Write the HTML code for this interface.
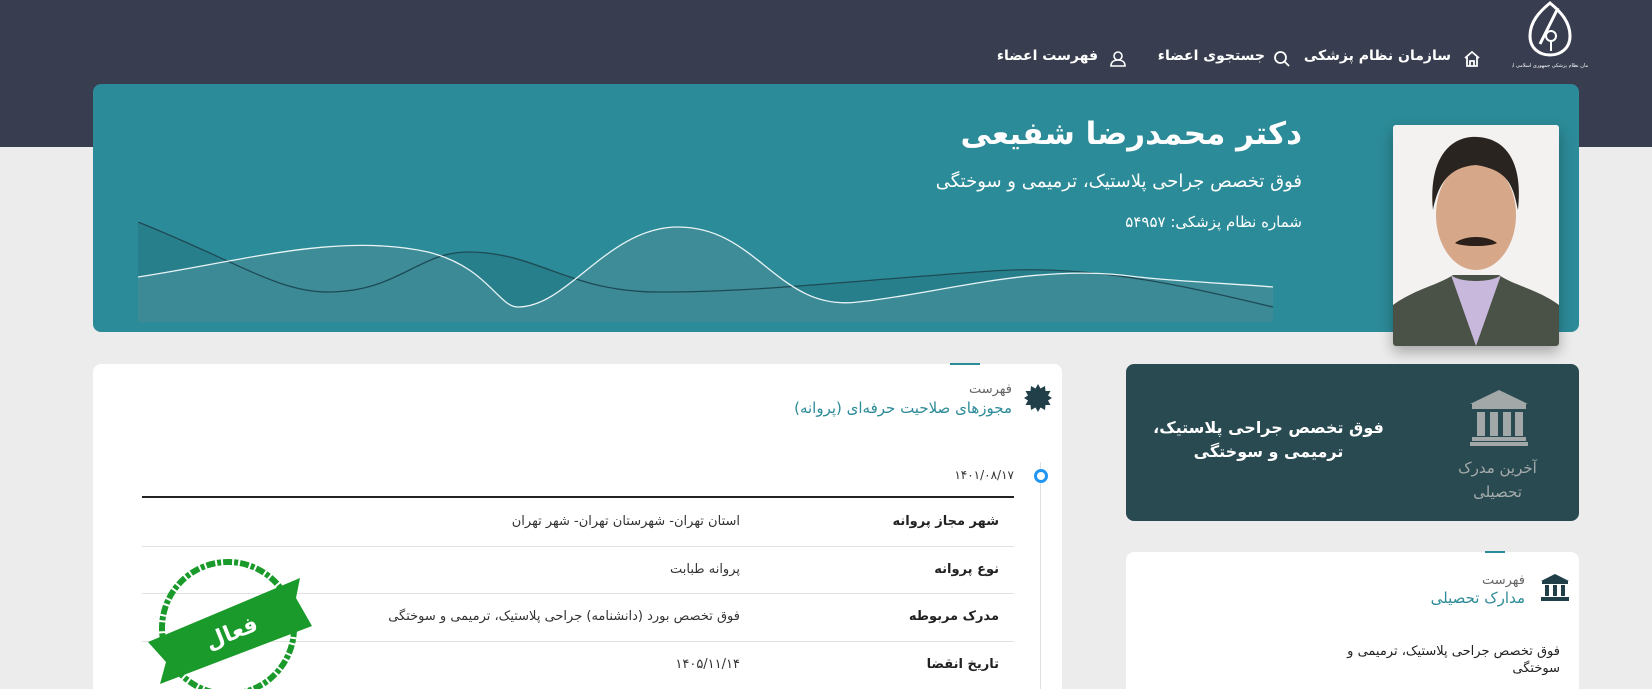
<!DOCTYPE html>
<html lang="fa" dir="rtl"><head><meta charset="utf-8">
<style>
*{margin:0;padding:0;box-sizing:border-box}
html{width:1652px;height:689px;overflow:hidden}
body{width:1652px;height:689px;overflow:hidden;background:#ececec;font-family:"DejaVu Sans","Liberation Sans",sans-serif;position:relative}
.abs{position:absolute}
.hdr{left:0;top:0;width:1652px;height:147px;background:#383d4f}
.nav{top:48px;color:#fff;font-size:14px;font-weight:bold;white-space:nowrap}
.banner{left:93px;top:84px;width:1486px;height:248px;background:#2c8b98;border-radius:8px;overflow:hidden}
.t{white-space:nowrap;direction:rtl}
.card{background:#fff;border-radius:8px 8px 0 0}
.lbl{font-size:13px;font-weight:bold;color:#222}
.val{font-size:13px;color:#333}
.sep{height:1px;background:#e3e3e3;left:142px;width:872px}
</style></head><body>
<div class="abs hdr"></div>
<svg class="abs" style="left:1512px;top:0px" width="76" height="74" viewBox="0 0 76 74">
<path d="M38 3 C27 12 18 22 18 36 C18 48 27 55 38 55 C49 55 58 48 58 36 C58 22 49 12 38 3Z" fill="none" stroke="#fff" stroke-width="3"/>
<path d="M46 8 L28 44" stroke="#fff" stroke-width="3"/>
<circle cx="39" cy="36" r="5" fill="none" stroke="#fff" stroke-width="2"/>
<path d="M39 41 V51" stroke="#fff" stroke-width="2"/>
<text x="38" y="67" font-size="5" fill="#fff" text-anchor="middle" font-family="DejaVu Sans">سازمان نظام پزشکی جمهوری اسلامی ایران</text>
</svg>
<svg class="abs" style="left:1463px;top:50px" width="18" height="18" viewBox="0 0 18 18"><path d="M2 8 L9 2 L16 8 M4 7 V16 H14 V7 M7 16 V11 H11 V16" fill="none" stroke="#fff" stroke-width="1.8"/></svg>
<div class="abs nav t" style="right:201px">سازمان نظام پزشکی</div>
<svg class="abs" style="left:1273px;top:50px" width="18" height="18" viewBox="0 0 18 18"><circle cx="7.5" cy="7.5" r="5.5" fill="none" stroke="#fff" stroke-width="1.8"/><path d="M11.5 11.5 L16 16" stroke="#fff" stroke-width="1.8"/></svg>
<div class="abs nav t" style="right:387px">جستجوی اعضاء</div>
<svg class="abs" style="left:1109px;top:50px" width="18" height="18" viewBox="0 0 18 18"><circle cx="9" cy="6" r="4" fill="none" stroke="#fff" stroke-width="1.6"/><path d="M2 16 C2 11 6 10 9 10 C12 10 16 11 16 16 Z" fill="none" stroke="#fff" stroke-width="1.6"/></svg>
<div class="abs nav t" style="right:554px">فهرست اعضاء</div>

<div class="abs banner">
<svg class="abs" style="left:45px;top:138px" width="1135" height="100" viewBox="0 0 1135 100">
<path d="M0 0 C100 40 140 70 190 70 C260 70 280 30 330 30 C400 30 430 70 520 70 C620 70 700 60 840 50 C950 40 1050 65 1135 85 V100 H0Z" fill="#287f8c"/>
<path d="M0 55 C100 40 200 10 290 30 C350 45 360 85 380 85 C430 85 470 5 540 5 C620 5 640 90 720 80 C800 72 900 40 1000 55 C1050 60 1100 62 1135 65 V100 H0Z" fill="#3f8c98" opacity="0.9"/>
<path d="M0 0 C100 40 140 70 190 70 C260 70 280 30 330 30 C400 30 430 70 520 70 C620 70 700 60 840 50 C950 40 1050 65 1135 85" fill="none" stroke="#1d4b55" stroke-width="1.3"/>
<path d="M0 55 C100 40 200 10 290 30 C350 45 360 85 380 85 C430 85 470 5 540 5 C620 5 640 90 720 80 C800 72 900 40 1000 55 C1050 60 1100 62 1135 65" fill="none" stroke="#e8f4f5" stroke-width="1.3"/>
</svg>
</div>
<div class="abs t" style="right:350px;top:116px;font-size:31px;font-weight:bold;color:#fff">دکتر محمدرضا شفیعی</div>
<div class="abs t" style="right:350px;top:171px;font-size:18px;color:#fff">فوق تخصص جراحی پلاستیک، ترمیمی و سوختگی</div>
<div class="abs t" style="right:350px;top:213px;font-size:15px;color:#fff">شماره نظام پزشکی: ۵۴۹۵۷</div>
<div class="abs" style="left:1393px;top:125px;width:166px;height:221px;background:#fff;border-radius:3px;box-shadow:0 6px 14px rgba(0,0,0,.3);overflow:hidden">
<svg width="166" height="221" viewBox="0 0 166 221">
<rect width="166" height="221" fill="#f4f2f0"/>
<path d="M0 221 V180 C20 165 45 160 60 150 L106 150 C120 160 146 165 166 180 V221Z" fill="#4a5146"/>
<path d="M58 150 L83 221 L108 150 C100 158 66 158 58 150Z" fill="#c8b9dc"/>
<ellipse cx="83" cy="90" rx="40" ry="55" fill="#d7a789"/>
<path d="M40 85 C35 30 60 10 85 12 C115 14 130 40 125 85 C120 60 115 45 83 40 C55 42 45 60 40 85Z" fill="#2a2420"/>
<path d="M62 118 C72 110 94 110 104 118 C96 122 70 122 62 118Z" fill="#2a1f1a"/>
</svg></div>

<div class="abs card" style="left:93px;top:364px;width:969px;height:325px"></div>
<div class="abs" style="left:950px;top:363px;width:30px;height:2px;background:#2c8b98"></div>
<svg class="abs" style="left:1024px;top:384px" width="28" height="28" viewBox="0 0 28 28"><polygon fill="#213f48" points="14,0 16.5,4.5 21,2 21.5,7 26.5,7 24,11.5 28,14 24,16.5 26.5,21 21.5,21 21,26 16.5,23.5 14,28 11.5,23.5 7,26 6.5,21 1.5,21 4,16.5 0,14 4,11.5 1.5,7 6.5,7 7,2 11.5,4.5"/></svg>
<div class="abs t" style="right:640px;top:382px;font-size:13px;color:#666">فهرست</div>
<div class="abs t" style="right:640px;top:399px;font-size:15px;color:#2c8b98">مجوزهای صلاحیت حرفه‌ای (پروانه)</div>
<div class="abs" style="left:1040px;top:462px;width:1px;height:227px;background:#e0e0e0"></div>
<div class="abs" style="left:1034px;top:469px;width:14px;height:14px;border:3px solid #2196f3;border-radius:50%;background:#fff"></div>
<div class="abs t" style="right:638px;top:468px;font-size:12px;color:#333">۱۴۰۱/۰۸/۱۷</div>
<div class="abs" style="left:142px;top:496px;width:872px;height:2px;background:#222"></div>
<div class="abs lbl t" style="right:653px;top:514px">شهر مجاز پروانه</div>
<div class="abs val t" style="right:912px;top:514px">استان تهران- شهرستان تهران- شهر تهران</div>
<div class="abs sep" style="top:546px"></div>
<div class="abs lbl t" style="right:653px;top:562px">نوع پروانه</div>
<div class="abs val t" style="right:912px;top:562px">پروانه طبابت</div>
<div class="abs sep" style="top:593px"></div>
<div class="abs lbl t" style="right:653px;top:609px">مدرک مربوطه</div>
<div class="abs val t" style="right:912px;top:609px">فوق تخصص بورد (دانشنامه) جراحی پلاستیک، ترمیمی و سوختگی</div>
<div class="abs sep" style="top:641px"></div>
<div class="abs lbl t" style="right:653px;top:657px">تاریخ انقضا</div>
<div class="abs val t" style="right:912px;top:657px">۱۴۰۵/۱۱/۱۴</div>
<svg class="abs" style="left:140px;top:550px" width="180" height="139" viewBox="0 0 180 139">
<circle cx="88" cy="78" r="66" fill="none" stroke="#1a9a2a" stroke-width="6" stroke-dasharray="9 2 4 2"/>
<polygon points="8,92 160,28 156,48 172,76 20,134 26,112" fill="#1a9a2a"/>
<text x="92" y="90" font-size="22" font-weight="bold" fill="#fff" text-anchor="middle" transform="rotate(-22 92 84)" font-family="DejaVu Sans">فعال</text>
</svg>

<div class="abs" style="left:1126px;top:364px;width:453px;height:157px;background:#284a50;border-radius:8px"></div>
<svg class="abs" style="left:1470px;top:390px" width="58" height="56" viewBox="0 0 58 56"><polygon points="29,0 58,14 0,14" fill="#a2a7a8"/><rect x="2" y="14" width="54" height="5" fill="#a2a7a8"/><rect x="7" y="22" width="8" height="24" fill="#a2a7a8"/><rect x="20" y="22" width="8" height="24" fill="#a2a7a8"/><rect x="33" y="22" width="8" height="24" fill="#a2a7a8"/><rect x="45" y="22" width="8" height="24" fill="#a2a7a8"/><rect x="2" y="47" width="54" height="4" fill="#a2a7a8"/><rect x="0" y="52" width="58" height="4" fill="#a2a7a8"/></svg>
<div class="abs t" style="left:1440px;width:115px;top:456px;font-size:15px;color:#a6abac;text-align:center;line-height:24px">آخرین مدرک<br>تحصیلی</div>
<div class="abs t" style="left:1150px;width:237px;top:416px;font-size:16px;font-weight:bold;color:#fff;text-align:center;line-height:24px">فوق تخصص جراحی پلاستیک،<br>ترمیمی و سوختگی</div>

<div class="abs card" style="left:1126px;top:552px;width:453px;height:137px"></div>
<div class="abs" style="left:1485px;top:551px;width:20px;height:2px;background:#2c8b98"></div>
<svg class="abs" style="left:1541px;top:574px" width="28" height="28" viewBox="0 0 28 28"><polygon points="14,0 28,7 0,7" fill="#213f48"/><rect x="1" y="7" width="26" height="3" fill="#213f48"/><rect x="4" y="11" width="4" height="11" fill="#213f48"/><rect x="12" y="11" width="4" height="11" fill="#213f48"/><rect x="20" y="11" width="4" height="11" fill="#213f48"/><rect x="0" y="23" width="28" height="4" fill="#213f48"/></svg>
<div class="abs t" style="right:127px;top:573px;font-size:13px;color:#666">فهرست</div>
<div class="abs t" style="right:127px;top:589px;font-size:15px;color:#2c8b98">مدارک تحصیلی</div>
<div class="abs t" style="right:92px;top:643px;font-size:13px;color:#222;line-height:17px;text-align:right">فوق تخصص جراحی پلاستیک، ترمیمی و<br>سوختگی</div>
</body></html>
